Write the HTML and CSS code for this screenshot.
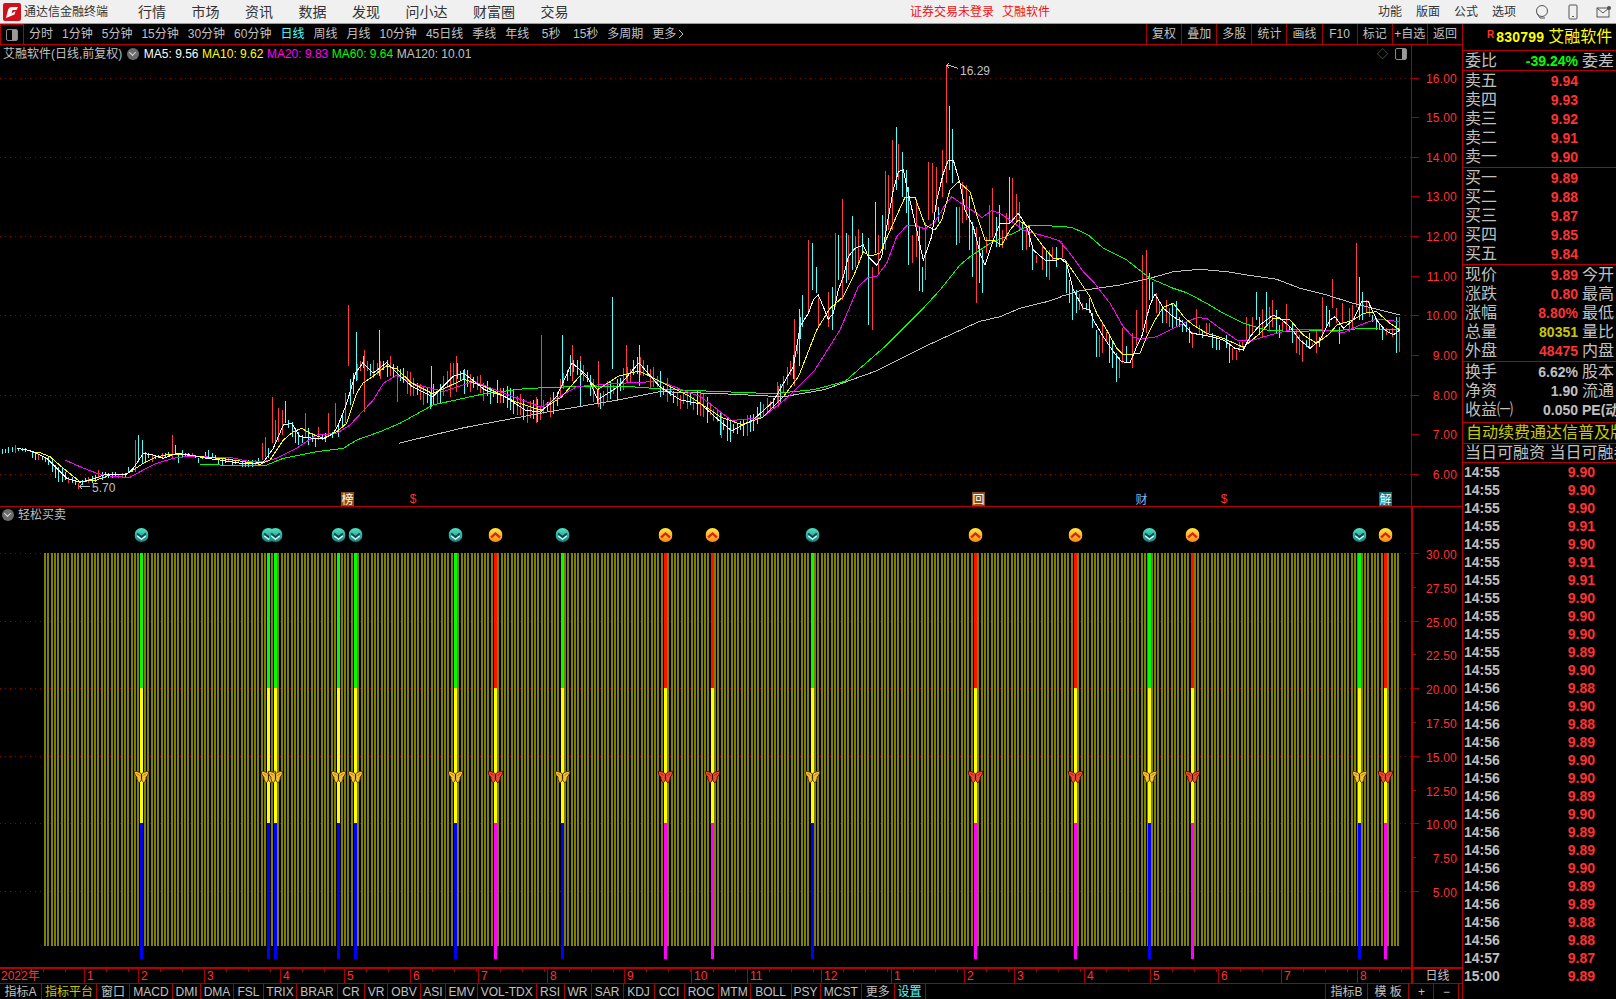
FILE: index.html
```html
<!DOCTYPE html>
<html lang="zh">
<head>
<meta charset="utf-8">
<title>通达信金融终端</title>
<link rel="stylesheet" href="styles.css">
</head>
<body>
<svg class="defs" width="0" height="0" aria-hidden="true">
  <defs>
    <linearGradient id="teal" x1="0" y1="0" x2="0" y2="1"><stop offset="0" stop-color="#4fe3bf"/><stop offset="1" stop-color="#0f8488"/></linearGradient>
    <linearGradient id="amber" x1="0" y1="0" x2="0" y2="1"><stop offset="0" stop-color="#ffe93e"/><stop offset="1" stop-color="#ff8a12"/></linearGradient>
    <symbol id="sig-down" viewBox="0 0 14 14">
      <circle cx="7" cy="7" r="7" fill="url(#teal)"/>
      <path d="M2.600 5.400 7 9l4.400-3.600" fill="none" stroke="#12424a" stroke-width="1.800"/>
      <path d="M2.800 8 7 11.200 11.200 8" fill="none" stroke="#e6fff8" stroke-width="1.300"/>
    </symbol>
    <symbol id="sig-up" viewBox="0 0 14 14">
      <circle cx="7" cy="7" r="7" fill="url(#amber)"/>
      <path d="M2.600 9.400 7 5.400l4.400 4" fill="none" stroke="#d8201c" stroke-width="2.200"/>
    </symbol>
    <symbol id="fly-gold" viewBox="0 0 16 14">
      <path d="M8 4C6 2 3 1 .8 1.300.8 4 2 6 3.500 7 3 9 4 11 5.500 12.800 7 12 7.600 10.500 8 9.500c.4 1 1 2.500 2.500 3.300C12 11 13 9 12.500 7 14 6 15.200 4 15.200 1.300 13 1 10 2 8 4Z" fill="#f2c230" stroke="#5c3606"/>
      <path d="M8 4v5.500" stroke="#3c2204" stroke-width="1.200"/>
      <path d="M3 3.500 6 5.500M13 3.500 10 5.500" stroke="#b9780f"/>
    </symbol>
    <symbol id="fly-red" viewBox="0 0 16 14">
      <path d="M8 4C6 2 3 1 .8 1.300.8 4 2 6 3.500 7 3 9 4 11 5.500 12.800 7 12 7.600 10.500 8 9.500c.4 1 1 2.500 2.500 3.300C12 11 13 9 12.500 7 14 6 15.200 4 15.200 1.300 13 1 10 2 8 4Z" fill="#ee4b35" stroke="#5a1208"/>
      <path d="M8 4v5.500" stroke="#3c0a04" stroke-width="1.200"/>
      <path d="M3 3.500 6 5.500M13 3.500 10 5.500" stroke="#a81a10"/>
    </symbol>
  </defs>
</svg>

<div class="app">
  <header class="titlebar">
    <svg class="logo" viewBox="0 0 18 18" width="18" height="18"><rect width="18" height="18" rx="2" fill="#d0101a"/><path d="M3 15 5 7c.6-2 2-3 4-3h6l-1.500 3H9.500l-1 3.500 4-2.500-1 3.500Z" fill="#fff"/></svg>
    <span class="brand">通达信金融终端</span>
    <nav class="menu"><span>行情</span><span>市场</span><span>资讯</span><span>数据</span><span>发现</span><span>问小达</span><span>财富圈</span><span>交易</span></nav>
    <div class="notice"><span>证券交易未登录</span><span>艾融软件</span></div>
    <div class="sysmenu"><span>功能</span><span>版面</span><span>公式</span><span>选项</span></div>
    <div class="sysicons">
      <svg viewBox="0 0 16 16" width="16" height="16"><circle cx="8" cy="7" r="5.500" fill="none" stroke="#555"/><path d="M3 9.500 6 14h5" fill="none" stroke="#555"/></svg>
      <svg viewBox="0 0 16 16" width="16" height="16"><rect x="4" y="1" width="8" height="14" rx="1" fill="none" stroke="#555"/><path d="M7 12.500h2" stroke="#555"/></svg>
      <svg viewBox="0 0 16 16" width="16" height="16"><rect x="1" y="4" width="12" height="9" fill="none" stroke="#555"/><path d="m1 4 6 5 6-5" fill="none" stroke="#555"/><circle cx="13" cy="4" r="2" fill="#555"/></svg>
    </div>
  </header>

  <div class="workspace">
    <main class="left">
      <div class="toolbar">
        <div class="tool-icon"><span class="toggle"></span></div>
        <div class="periods">
          <span>分时</span><span>1分钟</span><span>5分钟</span><span>15分钟</span><span>30分钟</span><span>60分钟</span><span class="active">日线</span><span>周线</span><span>月线</span><span>10分钟</span><span>45日线</span><span>季线</span><span>年线</span><span class="sec">5秒</span><span class="sec">15秒</span><span>多周期</span><span class="more">更多<svg viewBox="0 0 6 10" width="6" height="10"><path d="m1 1 4 4-4 4" fill="none" stroke="#c0c0c0"/></svg></span>
        </div>
        <div class="actions"><span>复权</span><span>叠加</span><span>多股</span><span>统计</span><span>画线</span><span>F10</span><span>标记</span><span>+自选</span><span>返回</span></div>
      </div>

      <section class="chart main-chart">
        <div class="legend">
          <span class="stock">艾融软件(日线,前复权)</span><i class="dot"></i>
          <span class="w">MA5: 9.56</span><span class="y">MA10: 9.62</span><span class="m">MA20: 9.83</span><span class="g">MA60: 9.64</span><span class="s">MA120: 10.01</span>
        </div>
        <div class="corner"><span class="dia">◇</span><span class="toggle"></span></div>
        <svg id="mainSvg" width="1462" height="461" viewBox="0 45 1462 461"></svg>
      </section>

      <section class="chart sub-chart">
        <div class="legend sublegend"><i class="dot"></i><span class="stock">轻松买卖</span></div>
        <svg id="subSvg" width="1462" height="460" viewBox="0 507 1462 460"></svg>
      </section>

      <div class="datebar" id="dateBar"></div>
      <div class="tabs" id="tabs"></div>
    </main>

    <aside class="quote">
      <div class="code"><span class="r-mark">R</span><span class="num">830799</span><span class="nm">艾融软件</span></div>
      <div class="sect one"><div class="row"><span class="lbl">委比</span><span class="val green">-39.24%</span><span class="rlbl">委差</span></div></div>
      <div class="sect book">
        <div class="row"><span class="lbl">卖五</span><span class="val red">9.94</span></div>
        <div class="row"><span class="lbl">卖四</span><span class="val red">9.93</span></div>
        <div class="row"><span class="lbl">卖三</span><span class="val red">9.92</span></div>
        <div class="row"><span class="lbl">卖二</span><span class="val red">9.91</span></div>
        <div class="row"><span class="lbl">卖一</span><span class="val red">9.90</span></div>
      </div>
      <div class="sect book">
        <div class="row"><span class="lbl">买一</span><span class="val red">9.89</span></div>
        <div class="row"><span class="lbl">买二</span><span class="val red">9.88</span></div>
        <div class="row"><span class="lbl">买三</span><span class="val red">9.87</span></div>
        <div class="row"><span class="lbl">买四</span><span class="val red">9.85</span></div>
        <div class="row"><span class="lbl">买五</span><span class="val red">9.84</span></div>
      </div>
      <div class="sect book">
        <div class="row"><span class="lbl">现价</span><span class="val red">9.89</span><span class="rlbl">今开</span></div>
        <div class="row"><span class="lbl">涨跌</span><span class="val red">0.80</span><span class="rlbl">最高</span></div>
        <div class="row"><span class="lbl">涨幅</span><span class="val red">8.80%</span><span class="rlbl">最低</span></div>
        <div class="row"><span class="lbl">总量</span><span class="val yel">80351</span><span class="rlbl">量比</span></div>
        <div class="row"><span class="lbl">外盘</span><span class="val red">48475</span><span class="rlbl">内盘</span></div>
      </div>
      <div class="sect three">
        <div class="row"><span class="lbl">换手</span><span class="val">6.62%</span><span class="rlbl">股本</span></div>
        <div class="row"><span class="lbl">净资</span><span class="val">1.90</span><span class="rlbl">流通</span></div>
        <div class="row"><span class="lbl">收益㈠</span><span class="val">0.050</span><span class="rlbl pe">PE(动</span></div>
      </div>
      <div class="sect banner">自动续费通达信普及版</div>
      <div class="sect margin">当日可融资 当日可融券</div>
      <div class="ticks" id="ticks"></div>
    </aside>
  </div>
</div>
<script src="chart.js"></script>
</body>
</html>
```
FILE: styles.css
```css
* { box-sizing: border-box; }
html, body { margin: 0; padding: 0; background: #000; }
body { width: 1616px; height: 999px; overflow: hidden; font: 12px/1 "Liberation Sans", "Noto Sans CJK SC", sans-serif; color: #c0c0c0; }
.defs { position: absolute; }
.app { display: flex; flex-direction: column; width: 1616px; height: 999px; }

.titlebar { height: 24px; flex: none; display: flex; align-items: center; background: #f0f0f0; border-bottom: 1px solid #9c9c9c; color: #333; padding-left: 3px; }
.logo { flex: none; }
.brand { margin-left: 3px; width: 114px; font-size: 12px; }
.menu { display: flex; gap: 25.500px; font-size: 14px; width: 772px; }
.notice { display: flex; gap: 8px; color: #f01010; font-size: 12px; width: 468px; }
.sysmenu { display: flex; gap: 14px; font-size: 12px; width: 156px; }
.sysicons { display: flex; gap: 15px; }

.workspace { flex: 1; display: flex; min-height: 0; }
.left { width: 1462px; flex: none; display: flex; flex-direction: column; }

.toolbar { height: 21px; flex: none; display: flex; border-bottom: 1px solid #b40000; }
.tool-icon { width: 24px; flex: none; display: flex; align-items: center; justify-content: center; border: 1px solid #b40000; border-bottom: 0; }
.toggle { display: inline-block; width: 12px; height: 12px; border: 1px solid #8a8a8a; border-radius: 2px; background: linear-gradient(90deg, #000 0 55%, #9a9a9a 55% 100%); }
.periods { flex: 1; display: flex; align-items: center; gap: 9px; padding-left: 5px; white-space: nowrap; }
.periods .active { color: #54ffff; }
.periods .sec { margin-left: 3.500px; }
.more { display: flex; align-items: center; gap: 2px; }
.actions { width: 316px; flex: none; display: flex; }
.actions span { flex: 1; display: flex; align-items: center; justify-content: center; border-left: 1px solid #a80000; white-space: nowrap; }

.chart { position: relative; flex: none; }
.chart svg { display: block; shape-rendering: crispEdges; }
.chart svg use { shape-rendering: auto; }
.dots { stroke: #900000; stroke-dasharray: 1 4; fill: none; }
.axisline { stroke: #a80000; fill: none; }
.thick { stroke: #b40000; stroke-width: 2; }
.axis { fill: #ff3232; font-size: 12px; text-anchor: end; letter-spacing: .2px; }
.mark { stroke: #c0c0c0; fill: none; }
.label { fill: #c0c0c0; font-size: 12px; }
.evt { font-size: 12px; }
.main-chart { height: 462px; border-bottom: 1px solid #b40000; }
.sub-chart { height: 460px; }
.legend { position: absolute; left: 3px; top: 2px; display: flex; align-items: center; gap: 3.500px; white-space: nowrap; height: 14px; z-index: 1; }
.sublegend { left: 2px; top: 1px; gap: 4px; }
.stock { color: #c0c0c0; }
.dot { position: relative; width: 12px; height: 12px; border-radius: 50%; background: #6c6c6c; margin: 0 1.500px 0 1px; }
.sublegend .dot { margin: 0; }
.dot::after { content: ""; position: absolute; left: 3px; top: 2px; width: 4px; height: 4px; border: solid #ddd; border-width: 0 1.500px 1.500px 0; transform: rotate(45deg); }
.w { color: #fff; } .y { color: #ffff00; } .m { color: #ff00ff; } .g { color: #00ff00; } .s { color: #c0c0c0; }
.corner { position: absolute; left: 1377px; top: 3px; display: flex; align-items: center; gap: 7px; color: #8a8a8a; z-index: 1; }
.dia { font-size: 11px; }

.datebar { height: 16px; flex: none; display: flex; border-top: 2px solid #b40000; color: #ff3232; width: 1462px; }
.month { flex: none; height: 100%; padding: 1px 0 0 2px; border-left: 1px solid #a80000; background: repeating-linear-gradient(90deg, transparent 0 21px, #a80000 21px 22px) 0 0 / 100% 3px no-repeat; overflow: hidden; white-space: nowrap; }
.month:first-child { border-left: 0; padding-left: 1px; }
.month.tf { color: #c0c0c0; text-align: center; padding-left: 0; background: none; border-left: 2px solid #b40000; }

.tabs { height: 16px; flex: none; display: flex; align-items: stretch; border-top: 1px solid #a80000; white-space: nowrap; }
.tab { flex: none; display: flex; align-items: center; justify-content: center; border-right: 1px solid #a80000; overflow: hidden; }
.tab.yel { color: #c8c800; }
.tab.cy { color: #54ffff; }

.quote { flex: 1; min-width: 0; border-left: 1px solid #b40000; overflow: hidden; }
.code { height: 27px; display: flex; align-items: center; padding-left: 24px; border-bottom: 1px solid #b40000; color: #ffff00; white-space: nowrap; }
.r-mark { color: #ff3232; font-size: 10px; font-weight: 700; align-self: flex-start; margin-top: 6px; margin-right: 2px; }
.num { font-size: 14px; font-weight: 700; letter-spacing: .2px; margin-right: 4px; }
.nm { font-size: 16px; }
.sect { border-bottom: 1px solid #b40000; white-space: nowrap; overflow: hidden; }
.one { height: 20px; }
.book { height: 97px; padding-bottom: 1px; }
.three { height: 61px; }
.banner { height: 21px; line-height: 20px; font-size: 16px; color: #c8c800; padding-left: 3px; }
.margin { height: 19px; line-height: 17px; font-size: 16px; padding-left: 2px; }
.row { display: flex; align-items: center; height: 19px; padding-left: 2px; font-size: 16px; }
.lbl { flex: none; color: #c0c0c0; }
.val { flex: 1; text-align: right; font-size: 14px; font-weight: 700; color: #c0c0c0; }
.rlbl { flex: none; width: 34px; margin-left: 4px; overflow: hidden; color: #c0c0c0; }
.pe { font-size: 14px; font-weight: 700; }
.red { color: #ff3232; } .green { color: #00ff00; } .yel { color: #c8c800; }
.book .row:not(:has(.rlbl)) .val { padding-right: 38px; }

.tick { display: flex; justify-content: space-between; height: 18px; align-items: center; padding: 0 21px 0 1px; font-size: 14px; font-weight: 700; }
.tick b { color: #ff3232; font-weight: 700; }
```
FILE: chart.js
```js
const SCALE = {
  z9: (x, y) => [780 + x / 3, 50 + y / 3],
  z10: (x, y) => [x / 3, 400 + y / 3],
  z11: (x, y) => [1060 + x / 3, 220 + y / 3],
  ov: (x, y) => [x * 1.0306, y * 1.0306]
};
function pts(scale, flat) {
  const out = [];
  for (let i = 0; i < flat.length; i += 2) out.push(SCALE[scale](flat[i], flat[i + 1]));
  return out;
}
const MA5 = [
  ...pts('z10', [50,145,80,150,100,155,140,175,170,205,200,235,240,247,280,237,320,222,380,222,400,205,430,160,460,165,490,175,530,160,570,165,620,175,660,180,700,187,740,192,790,187,820,145,850,75,875,70,900,110,940,115,975,115,1000,100,1015,75,1040,10]),
  ...pts('ov', [345,362,352,352,362,362,375,352,385,362,400,375,420,385,440,365,450,362,470,378,490,385,510,398,525,400,540,385,555,352,570,365,580,388,600,375,620,352,640,375,660,388,680,392,700,410,710,418,730,408,750,390,770,355]),
  ...pts('z9', [60,830,85,790,100,750,115,735,130,770,145,808,160,790,175,720,190,680,205,620,225,595,250,585,265,620,290,645,305,620,320,530,340,420,355,365,370,360,385,430,410,540,430,630,455,560,470,450,490,370,505,330,520,330,540,400,555,480,580,530,600,610,615,645,640,570,660,520,690,520,715,490,740,530,760,600,795,630,830,630]),
  ...pts('z11', [0,115,20,130,40,210,70,265,90,270,100,300,130,350,160,395,185,425,210,428,230,380,245,350,270,255,285,222,310,265,340,290,365,305,395,340,430,345,455,350,490,360,525,385,550,390,570,350,600,315,640,285,660,295,690,320,720,360,750,385,780,360,810,300,825,290,850,325,880,300,905,245,925,245,950,300,975,330,1000,345,1020,330])
];
const MA10 = [
  ...pts('z10', [90,155,120,158,150,170,190,205,240,245,290,240,330,225,380,222,400,210,430,190,470,170,510,163,560,165,620,172,660,175,720,183,780,193,810,180,850,120,880,95,905,85,930,100,970,115,1010,95,1040,70,1070,-20]),
  ...pts('ov', [352,372,362,365,375,355,385,358,400,372,420,382,450,368,470,375,500,390,525,398,545,385,565,362,580,378,600,365,620,360,640,370,670,385,700,405,720,412,740,405,760,385,775,365]),
  ...pts('z9', [110,840,150,775,190,740,220,680,250,605,270,618,300,610,340,520,375,442,405,442,435,525,465,540,485,510,510,420,535,395,570,425,595,510,615,570,640,570,665,585,690,540,715,510,745,530,790,590,820,625]),
  ...pts('z11', [0,115,15,120,50,170,90,230,110,280,140,330,170,385,190,405,240,400,260,350,285,300,310,262,340,250,375,295,400,315,440,340,490,355,550,382,600,340,640,295,690,300,730,345,770,370,810,340,830,315,880,300,910,280,950,275,990,310,1020,330])
];
const MA20 = [
  ...pts('z10', [195,180,240,200,290,220,340,230,390,232,430,210,470,190,520,175,570,168,640,172,690,172,750,185,790,185,830,175,890,145,950,105,1010,100,1050,75,1120,0]),
  ...pts('ov', [372,372,385,364,400,372,430,380,460,370,490,382,525,395,560,375,600,372,640,370,680,385,710,408,740,405,765,385,790,360]),
  ...pts('z9', [180,840,235,710,265,682,290,680,320,640,350,560,380,527,410,527,435,537,465,515,495,465,515,440,550,465,590,490,605,503,635,482,660,490,690,510,730,540,800,560,845,575]),
  ...pts('z11', [0,65,30,100,70,155,100,185,150,250,190,320,220,352,240,358,290,350,340,325,380,305,410,293,440,295,480,325,530,360,580,360,630,345,700,328,770,328,850,338,900,315,950,297,1020,305])
];
const MA60 = [
  ...pts('z10', [600,192,660,195,800,195,850,175,950,155,1030,145,1070,120,1140,95,1200,70]),
  ...pts('ov', [420,393,470,382,510,377,560,375,610,375,650,378,700,380,750,382,790,378,820,370,860,335]),
  ...pts('z9', [365,840,420,785,480,720,540,645,570,620,630,580,700,550,750,525,800,527]),
  ...pts('z11', [35,22,85,45,130,85,200,120,270,175,340,205,380,218,440,250,490,280,550,310,620,330,700,335,770,332,850,330,910,325,1020,330])
];
const MA120 = [
  ...pts('ov', [387,430,450,415,530,400,600,388,640,380,700,382,760,385,800,378,850,360,900,335,950,312]),
  ...pts('z9', [660,800,720,775,800,755,840,742]),
  ...pts('z11', [0,230,60,212,180,195,270,175,340,155,420,148,500,155,560,165,650,178,720,205,800,225,880,250,960,270,1020,285])
];

// candle wicks traced from the reference: [x, top, bottom]
const Z10 = {
  c: [[5,148,162],[15,146,160],[25,142,158],[35,140,155],[55,143,153],[65,145,153],[75,145,155],[95,155,175],[105,155,180],[125,168,180],[135,170,185],[145,170,195],[155,180,215],[165,195,235],[175,200,245],[185,205,245],[195,215,240],[215,230,250],[225,240,255],[245,240,255],[255,235,245],[275,228,250],[285,225,245],[305,215,240],[315,215,235],[325,218,235],[335,215,235],[345,215,230],[375,220,230],[385,200,220],[395,205,215],[415,105,185],[425,120,190],[435,155,185],[445,160,175],[465,165,178],[475,165,175],[495,160,172],[505,155,170],[525,135,165],[535,165,190],[545,150,175],[555,160,170],[565,160,170],[585,165,175],[595,175,190],[605,168,178],[615,155,175],[625,150,175],[635,160,175],[645,165,180],[655,170,195],[665,175,195],[675,175,190],[695,180,195],[705,180,192],[725,180,200],[735,180,200],[745,180,200],[755,180,200],[775,175,195],[805,145,175],[855,3,70],[865,60,85],[875,65,110],[885,85,130],[895,95,135],[905,105,130],[925,85,135],[935,100,125],[945,115,140],[965,105,120],[975,100,125],[995,95,115],[1015,70,110],[1025,45,85]],
  r: [[45,135,158],[115,165,180],[205,230,250],[235,250,268],[265,232,250],[295,210,235],[355,222,235],[365,220,235],[405,120,215],[455,165,185],[485,160,175],[515,105,175],[575,160,170],[685,172,185],[715,178,190],[765,180,195],[785,130,180],[795,110,170],[815,-10,130],[825,60,130],[835,25,125],[845,30,105],[915,40,115],[955,80,120],[985,40,105],[1005,10,80],[1035,-20,70]]
};
const Z9 = {
  c: [[67,735,830],[97,580,720],[107,650,730],[157,710,840],[175,555,690],[197,550,700],[217,498,660],[247,550,610],[265,565,825],[285,457,610],[305,495,610],[347,232,420],[367,305,440],[377,360,490],[385,410,645],[416,530,722],[427,650,725],[475,470,515],[507,168,360],[517,237,400],[527,470,585],[567,437,600],[577,515,680],[597,560,700],[607,600,730],[647,500,590],[657,465,590],[687,382,520],[727,520,600],[747,525,590],[757,590,660],[797,600,680],[827,590,650]],
  r: [[85,570,790],[115,745,830],[145,725,830],[165,550,770],[187,447,750],[205,555,690],[225,558,650],[235,537,640],[277,650,840],[295,555,670],[316,362,600],[325,375,540],[337,270,540],[355,282,390],[397,555,640],[407,447,620],[436,520,690],[445,335,510],[457,340,490],[467,350,480],[487,300,440],[497,45,400],[537,470,580],[547,395,520],[557,405,510],[587,530,760],[617,560,610],[627,465,570],[637,415,560],[667,540,595],[677,490,570],[697,385,510],[707,432,520],[717,455,540],[737,530,600],[767,615,640],[787,585,660],[807,600,690],[817,590,630]]
};
const Z11 = {
  c: [[17,130,220],[27,180,250],[37,200,300],[47,210,280],[77,250,270],[87,235,280],[97,280,325],[107,330,410],[147,345,430],[157,365,445],[167,400,485],[197,378,425],[267,160,240],[277,185,240],[307,260,310],[337,250,325],[347,242,320],[357,290,320],[367,300,335],[377,305,335],[387,320,370],[427,330,355],[457,340,385],[467,350,390],[477,360,390],[497,345,385],[507,370,428],[587,217,300],[597,290,345],[617,215,320],[647,270,340],[657,315,355],[687,320,330],[697,305,370],[737,360,380],[747,340,385],[777,350,380],[797,258,320],[807,270,320],[837,320,372],[897,172,300],[907,215,300],[937,285,305],[947,295,330],[957,310,330],[967,320,360],[1007,290,400]],
  r: [[7,70,115],[57,222,270],[67,250,270],[117,345,410],[127,310,400],[137,335,365],[177,410,475],[187,323,430],[217,340,445],[227,270,375],[247,105,330],[257,90,340],[287,220,280],[297,245,285],[317,240,310],[327,265,320],[397,335,385],[407,267,325],[417,315,345],[437,310,345],[447,310,340],[517,385,420],[527,390,420],[537,365,395],[547,365,385],[557,292,360],[567,312,365],[577,292,345],[607,268,350],[627,262,330],[637,240,320],[667,305,335],[677,252,330],[707,330,400],[717,345,405],[727,360,425],[757,370,380],[767,330,400],[787,232,360],[817,178,265],[827,265,310],[847,250,310],[867,265,335],[877,255,330],[887,70,260],[917,240,280],[927,245,290],[977,325,345],[987,330,340],[997,325,350],[1017,290,395]]
};
// tall candles read from the whole-screen view (overview scale)
const OVS = [['r',338,296,355],['c',345,322,370],['r',353,340,400],['c',368,320,365],['r',385,360,390],['c',418,355,395],['r',437,352,385],['r',442,345,380],['c',450,358,382],['r',525,325,395],['r',520,385,410],['c',545,325,375],['r',555,335,370],['c',563,350,395],['c',594,288,358],['r',580,350,395],['r',607,335,370],['c',620,335,375],['c',640,360,385],['r',700,400,425],['c',705,405,428],['r',755,375,395],['r',770,310,375],['c',775,300,355]];

const CYAN = '#54fcfc', RED = '#ff3c3c';
function wick(x, t, b, col) {
  const px = Math.round(x) + 0.5;
  return `<path d="M${px} ${Math.round(t)}V${Math.round(b)}" stroke="${col}"/>`;
}
function ma5At(x) {
  for (let i = 1; i < MA5.length; i++) {
    if (x <= MA5[i][0]) {
      const [a, b] = [MA5[i - 1], MA5[i]];
      return a[1] + (b[1] - a[1]) * (x - a[0]) / (b[0] - a[0] || 1);
    }
  }
  return MA5[MA5.length - 1][1];
}
function polyline(p, col) {
  return `<polyline fill="none" stroke="${col}" points="${p.map(q => q[0].toFixed(1) + ',' + q[1].toFixed(1)).join(' ')}"/>`;
}

function buildMain() {
  let s = '';
  // price grid and axis
  const yOf = v => 77.5 + (16 - v) * 39.65;
  for (let v = 16; v >= 6; v--) {
    const y = Math.round(yOf(v)) + 0.5;
    if (v % 2 === 0) s += `<path d="M0 ${y}H1411" class="dots"/>`;
    s += `<path d="M1411 ${y}H1419" class="axisline"/>`;
    s += `<text x="1457" y="${y + 4}" class="axis">${v}.00</text>`;
  }
  s += `<path d="M1411.500 45V506" class="axisline"/>`;
  // generated small candles between the traced spans
  let seed = 17;
  const rnd = () => (seed = (seed * 9301 + 49297) % 233280) / 233280;
  for (let x = 350; x < 802; x += 10 / 3) {
    const m = ma5At(x);
    s += wick(x, m - 3 - rnd() * 11, m + 3 + rnd() * 11, rnd() > 0.5 ? RED : CYAN);
  }
  OVS.forEach(([c, x, t, b]) => { s += wick(x * 1.0306, t * 1.0306, b * 1.0306, c === 'r' ? RED : CYAN); });
  [[Z10, 'z10'], [Z9, 'z9'], [Z11, 'z11']].forEach(([set, k]) => {
    ['c', 'r'].forEach(c => set[c].forEach(([x, t, b]) => {
      const [fx, ft] = SCALE[k](x, t), [, fb] = SCALE[k](x, b);
      s += wick(fx, ft, fb, c === 'r' ? RED : CYAN);
    }));
  });
  s += polyline(MA120, '#c0c0c0') + polyline(MA60, '#00ff00') + polyline(MA20, '#ff00ff') + polyline(MA10, '#ffff00') + polyline(MA5, '#ffffff');
  // extreme markers
  s += `<path d="M946 65.500H950M946 65.500l3-2M946 65.500l3 2M950 65.500l8 3" class="mark"/><text x="960" y="75" class="label">16.29</text>`;
  s += `<path d="M79 486.500H90M79 486.500l3-2M79 486.500l3 2" class="mark"/><text x="92" y="492" class="label">5.70</text>`;
  // event markers on the bottom of the price panel
  const boxes = [[347, '榜', '#8c4a14', '#fff'], [978, '回', '#8c4a14', '#fff'], [1141, '财', '#000', '#7fb4ff'], [1385, '解', '#0a7580', '#fff']];
  boxes.forEach(([x, t, bg, fg]) => {
    s += `<rect x="${x - 6}" y="492" width="13" height="14" fill="${bg}"/><text x="${x + 0.5}" y="503.500" text-anchor="middle" fill="${fg}" class="evt">${t}</text>`;
  });
  [413, 1224].forEach(x => { s += `<text x="${x}" y="503" text-anchor="middle" fill="#ff3232" class="evt">$</text>`; });
  document.getElementById('mainSvg').innerHTML = s;
}

function buildSub() {
  let s = '';
  const yOf = v => 553 + (30 - v) * 13.52;
  for (let v = 30; v >= 5; v -= 2.5) {
    const y = Math.round(yOf(v)) + 0.5;
    if (v % 5 === 0) s += `<path d="M0 ${y}H1411" class="dots"/>`;
    s += `<path d="M1411 ${y}H${v % 5 === 0 ? 1419 : 1416}" class="axisline"/>`;
    s += `<text x="1457" y="${y + 5}" class="axis">${v.toFixed(2)}</text>`;
  }
  s += `<path d="M1412 507V967" class="axisline thick"/>`;
  // olive background columns
  let d = '';
  for (let i = 0; i < 407; i++) {
    const x = Math.round(44 + i * 10 / 3);
    d += `M${x} 553h2v393h-2z`;
  }
  s += `<path d="${d}" fill="#808000"/>`;
  // buy / sell signal columns: [x, isSell]
  const sig = [[140,0],[267,0],[274,0],[337,0],[354,0],[454,0],[494,1],[561,0],[664,1],[711,1],[811,0],[974,1],[1074,1],[1148,0],[1191,1],[1358,0],[1384,1]];
  let top = '', mid = '', low = '', over = '';
  sig.forEach(([x, sell]) => {
    top += `<rect x="${x}" y="553" width="3" height="135" fill="${sell ? '#ff1000' : '#00ff00'}"/>`;
    mid += `<rect x="${x}" y="688" width="3" height="135" fill="#ffff00"/>`;
    low += `<rect x="${x}" y="823" width="3" height="136" fill="${sell ? '#ff00ff' : '#0000ff'}"/>`;
    over += `<use href="#${sell ? 'sig-up' : 'sig-down'}" x="${x - 5.5}" y="528" width="14" height="14"/>`;
    over += `<use href="#${sell ? 'fly-red' : 'fly-gold'}" x="${x - 7}" y="770" width="17" height="14"/>`;
  });
  s += top + mid + low + over;
  document.getElementById('subSvg').innerHTML = s;
}

function buildDates() {
  const marks = [[0,'2022年'],[84,'1'],[138,'2'],[204,'3'],[280,'4'],[344,'5'],[410,'6'],[478,'7'],[547,'8'],[624,'9'],[691,'10'],[747,'11'],[821,'12'],[891,'1'],[964,'2'],[1014,'3'],[1084,'4'],[1150,'5'],[1218,'6'],[1281,'7'],[1357,'8'],[1411,null]];
  const bar = document.getElementById('dateBar');
  marks.forEach(([x, t], i) => {
    const el = document.createElement('div');
    if (t === null) { el.className = 'month tf'; el.textContent = '日线'; el.style.width = (1462 - x) + 'px'; }
    else { el.className = 'month'; el.textContent = t; el.style.width = (marks[i + 1][0] - x) + 'px'; }
    bar.appendChild(el);
  });
}

function buildTabs() {
  const left = [['指标A',42],['指标平台',55,'yel'],['窗口',33],['MACD',43],['DMI',28],['DMA',33],['FSL',30],['TRIX',33],['BRAR',41],['CR',27],['VR',23],['OBV',33],['ASI',25],['EMV',32],['VOL-TDX',58.5],['RSI',28],['WR',27],['SAR',32],['KDJ',31],['CCI',30],['ROC',34],['MTM',32],['BOLL',41],['PSY',29],['MCST',41.5],['更多',32.5],['设置',31,'cy']];
  const right = [['指标B',41.7],['模 板',41.6],['+',25],['−',25]];
  const bar = document.getElementById('tabs');
  const add = ([t, w, c]) => {
    const el = document.createElement('span');
    el.className = 'tab' + (c ? ' ' + c : '');
    el.textContent = t;
    el.style.width = w + 'px';
    bar.appendChild(el);
  };
  left.forEach(add);
  add(['', 400.7]);
  right.forEach(add);
}

function buildTicks() {
  const rows = '9.90 9.90 9.90 9.91 9.90 9.91 9.91 9.90 9.90 9.90 9.89 9.90 9.88 9.90 9.88 9.89 9.90 9.90 9.89 9.90 9.89 9.89 9.90 9.89 9.89 9.88 9.88 9.87 9.89'.split(' ');
  const box = document.getElementById('ticks');
  rows.forEach((v, i) => {
    const time = i < 12 ? '14:55' : i < 27 ? '14:56' : i === 27 ? '14:57' : '15:00';
    const el = document.createElement('div');
    el.className = 'tick';
    el.innerHTML = `<span>${time}</span><b>${v}</b>`;
    box.appendChild(el);
  });
}

buildMain();
buildSub();
buildDates();
buildTabs();
buildTicks();
```
